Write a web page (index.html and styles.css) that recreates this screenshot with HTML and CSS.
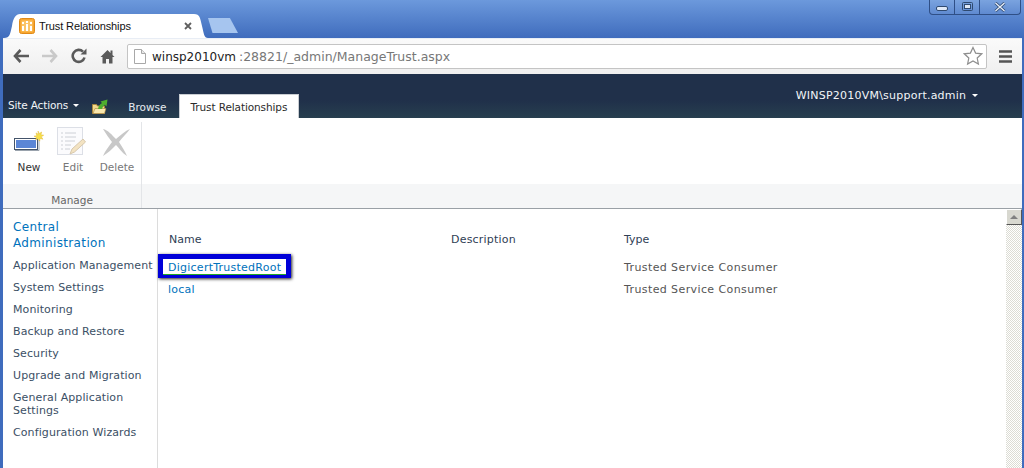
FILE: index.html
```html
<!DOCTYPE html>
<html lang="en">
<head>
<meta charset="utf-8">
<title>Trust Relationships</title>
<link rel="stylesheet" href="styles.css">
</head>
<body>
<div class="window">
  <header class="titlebar">
    <div class="tab">
      <svg class="favicon" width="16" height="16" viewBox="0 0 16 16"><rect x="0.5" y="0.5" width="15" height="15" rx="2" fill="#f7a630" stroke="#e08a18"/><rect x="2.500" y="2.500" width="11" height="11" fill="#fbc468"/><path d="M3 8h2v5H3zM7 6h2v7H7zM11 8h2v5h-2z" fill="#fff"/><path d="M3 4h2v2H3zM7 3h2v2H7zM11 4h2v2h-2z" fill="#fff"/></svg>
      <span class="tab-title">Trust Relationships</span>
      <svg class="tab-close" width="8" height="8" viewBox="0 0 8 8"><path d="M1 1l6 6M7 1l-6 6" stroke="#5f5f5f" stroke-width="1.800"/></svg>
    </div>
    <div class="new-tab"></div>
    <div class="win-buttons">
      <div class="win-btn win-min"><svg width="12" height="6" viewBox="0 0 12 6"><rect x="0.5" y="0.5" width="11" height="4" rx="1.500" fill="#dfe9f7" stroke="#2f4a70"/></svg></div>
      <div class="win-btn win-max"><svg width="11" height="10" viewBox="0 0 11 10"><rect x="0.5" y="0.5" width="10" height="8" rx="1" fill="none" stroke="#2f4a70"/><rect x="2.500" y="2.500" width="6" height="4" fill="#dfe9f7" stroke="#2f4a70"/></svg></div>
      <div class="win-btn win-close"><svg width="12" height="10" viewBox="0 0 12 10"><path d="M1.500 1l9 8M10.500 1l-9 8" stroke="#2f4a70" stroke-width="3"/><path d="M1.500 1l9 8M10.500 1l-9 8" stroke="#e6eef9" stroke-width="1.400"/></svg></div>
    </div>
  </header>

  <nav class="toolbar">
    <svg class="nav-icon" width="16" height="14" viewBox="0 0 16 14"><path d="M7.500 1L2 7l5.500 6M2.500 7H16" fill="none" stroke="#5a5a5a" stroke-width="2.600"/></svg>
    <svg class="nav-icon" width="16" height="14" viewBox="0 0 16 14"><path d="M8.500 1L14 7l-5.500 6M13.500 7H0" fill="none" stroke="#c9c9c9" stroke-width="2.600"/></svg>
    <svg class="nav-icon" width="16" height="16" viewBox="0 0 16 16"><path d="M13.500 9.500A6 6 0 1 1 12 3.700" fill="none" stroke="#5a5a5a" stroke-width="2.600"/><path d="M9.500 6.500h6v-6z" fill="#5a5a5a"/></svg>
    <svg class="nav-icon home" width="15" height="15" viewBox="0 0 15 15"><path d="M7.500 1L0.500 8h2v6.500h3.500V10h3v4.500h3.500V8h2l-2-2V1.500h-2v2.500z" fill="#5a5a5a"/></svg>
    <div class="omnibox">
      <svg class="page-icon" width="12" height="15" viewBox="0 0 12 15"><path d="M0.500 0.500h7l4 4v10h-11z" fill="#fff" stroke="#a8a8a8"/><path d="M7.500 0.500v4h4" fill="#e8e8e8" stroke="#a8a8a8"/></svg>
      <span class="url"><span class="host">winsp2010vm</span><span class="path">:28821/_admin/ManageTrust.aspx</span></span>
      <svg class="star" width="20" height="20" viewBox="0 0 20 20"><path d="M10 1.500l2.600 5.600 6.100 0.700-4.500 4.200 1.200 6.100L10 15l-5.400 3.100 1.200-6.100L1.300 7.800l6.100-0.700z" fill="#fff" stroke="#8e8e8e" stroke-width="1.200"/></svg>
    </div>
    <svg class="menu-icon" width="13" height="13" viewBox="0 0 13 13"><path d="M0 1.500h13M0 6.500h13M0 11.500h13" stroke="#555" stroke-width="2.600"/></svg>
  </nav>

  <main class="page">
    <div class="topbar">
      <div class="topbar-row">
        <span class="site-actions">Site Actions <i class="caret"></i></span>
        <svg class="folder-up" width="16" height="15" viewBox="0 0 16 15"><path d="M0.500 5.500h4l1 1.500h7v7.500h-12z" fill="#f3d98c" stroke="#a8853c"/><path d="M1 14.500l2-5h11l-1.500 5z" fill="#f9e8ae" stroke="#a8853c" stroke-width="0.600"/><path d="M6 10C6.500 7 8 5 10 4L8.500 2.500 15.500 0.500 14.500 7.500 12.800 5.800C11.500 7 10.500 8.500 10 10z" fill="#4fae2e"/></svg>
        <span class="ribbon-tab">Browse</span>
        <span class="ribbon-tab active">Trust Relationships</span>
        <span class="user">WINSP2010VM\support.admin <i class="caret"></i></span>
      </div>
    </div>
    <section class="ribbon">
      <div class="ribbon-group">
        <div class="ribbon-buttons">
          <div class="rbtn">
            <svg width="32" height="32" viewBox="0 0 32 32"><rect x="1.500" y="12.500" width="23" height="11" fill="#fff" stroke="#44546a"/><rect x="3" y="14" width="20" height="8" fill="#5b86d6"/><path d="M2 24.500h24V14" fill="none" stroke="#9aa3ad"/><path d="M25 5l1.200 2.500 2.500-1.500-0.800 2.800 2.800 0.400-2.400 1.600 1.600 2.400-2.800-0.800-0.400 2.800-1.700-2.400-2.400 1.200 1-2.600-2.600-1.200 2.800-0.500-0.800-2.800 2.400 1.300z" fill="#f6e04a" stroke="#e2b93a" stroke-width="0.500"/></svg>
            <span>New</span>
          </div>
          <div class="rbtn disabled">
            <svg width="32" height="32" viewBox="2 0 32 32"><rect x="2.500" y="1.500" width="25" height="27" fill="#fbfbfd" stroke="#dcdfe6"/><path d="M6 7h2M10 7h11M6 11h2M10 11h11M6 15h2M10 15h10M6 19h2M10 19h6M6 23h2M10 23h5" stroke="#cdd0d6"/><path d="M15 28l2-5 11-10 2.500 3-11 10z" fill="#f3e3c2" stroke="#d7c8ad"/></svg>
            <span>Edit</span>
          </div>
          <div class="rbtn disabled">
            <svg width="32" height="32" viewBox="1 0 32 32"><path d="M3 3c5 1 9 6 13 10 5-4 9-8 14-10-3 4-8 9-11 13 3 5 6 9 8 14-5-3-8-8-11-11-4 4-8 8-13 11 2-5 6-10 9-14C9 12 6 8 3 3z" fill="#c8c8c8"/></svg>
            <span>Delete</span>
          </div>
        </div>
        <div class="group-label">Manage</div>
      </div>
      <div class="ribbon-rest"><div class="ribbon-rest-bottom"></div></div>
    </section>
    <div class="content">
      <aside class="quicknav">
        <a class="qn-head">Central Administration</a>
        <ul class="qn-list">
          <li>Application Management</li>
          <li>System Settings</li>
          <li>Monitoring</li>
          <li>Backup and Restore</li>
          <li>Security</li>
          <li>Upgrade and Migration</li>
          <li>General Application Settings</li>
          <li>Configuration Wizards</li>
        </ul>
      </aside>
      <div class="main-col">
        <div class="list">
          <div class="row head"><span class="c1">Name</span><span class="c2">Description</span><span class="c3">Type</span></div>
          <div class="row"><span class="c1"><a class="link callout">DigicertTrustedRoot</a></span><span class="c2"></span><span class="c3">Trusted Service Consumer</span></div>
          <div class="row"><span class="c1"><a class="link">local</a></span><span class="c2"></span><span class="c3">Trusted Service Consumer</span></div>
        </div>
      </div>
      <div class="scrollbar"><div class="scroll-btn"><i></i></div></div>
    </div>
  </main>
</div>
</body>
</html>
```

FILE: styles.css
```css
* { box-sizing: border-box; }
html, body { margin: 0; padding: 0; height: 100%; overflow: hidden; }
body { font-family: "DejaVu Sans", Verdana, sans-serif; font-size: 11px; }
.window {
  width: 1024px; height: 468px; display: flex; flex-direction: column;
  background: linear-gradient(#6c99dc, #3f6cbd 38px);
  padding: 0 2px 0 3px;
}
.titlebar { height: 38px; flex: none; display: flex; align-items: flex-end; position: relative; margin-left: -3px; margin-right: -2px; }
.tab {
  width: 204px; height: 24px; margin-left: 4px; background: #fff;
  clip-path: path("M0 24 C6 24 6 20 8 12 C9 4 12 0 16 0 H190 C196 0 196 4 198 12 C200 20 200 24 204 24 Z");
  display: flex; align-items: center; padding: 0 0 1px 15px;
}
.favicon { flex: none; }
.tab-title { margin-left: 4px; font-family: "Liberation Sans", Arial, sans-serif; font-size: 11px; letter-spacing: -0.100px; color: #111; width: 145px; white-space: nowrap; }
.new-tab { width: 30px; height: 15px; margin: 0 0 5px 0; background: #a6c5ef; clip-path: polygon(0 0, 73% 0, 100% 100%, 15% 100%); }
.win-buttons {
  position: absolute; right: 3px; top: 0; width: 92px; height: 15px; display: flex;
  border: 1px solid #2f4f86; border-top: 0; border-radius: 0 0 4px 4px; background: linear-gradient(#7aa3df, #5f8ad0);
}
.win-btn { display: flex; align-items: center; justify-content: center; }
.win-min { width: 25px; border-right: 1px solid #2f4f86; padding-top: 3px; }
.win-max { width: 25px; border-right: 1px solid #2f4f86; }
.win-close { flex: 1; }
.toolbar {
  height: 36px; flex: none; background: linear-gradient(#fafafa, #efefef); display: flex; align-items: center;
  padding: 0 10px 1px 10px; border-top: 1px solid #e8edf5;
}
.nav-icon { flex: none; margin-right: 13px; }
.nav-icon.home { margin-right: 12px; }
.omnibox {
  flex: 1; height: 25px; margin-right: 12px; background: #fff; border: 1px solid #c4c4c4; border-radius: 2px;
  display: flex; align-items: center; padding: 0 3px 0 6px;
}
.page-icon { flex: none; }
.url { margin-left: 6px; flex: 1; font-family: "DejaVu Sans", sans-serif; white-space: nowrap; }
.host { color: #222; font-size: 12px; }
.path { color: #777; font-size: 12.500px; margin-left: 3px; }
.star { flex: none; }
.page { flex: 1; min-height: 0; display: flex; flex-direction: column; background: #fff; }
.topbar {
  height: 44px; flex: none; background: linear-gradient(#20304a 60%, #273f4f); display: flex; align-items: flex-end;
}
.topbar-row { display: flex; align-items: flex-end; width: 100%; height: 24px; color: #fff; position: relative; }
.site-actions { margin: 0 0 7px 5px; color: #f2f5f8; white-space: nowrap; font-size: 10.500px; letter-spacing: -0.150px; }
.caret { display: inline-block; width: 0; height: 0; border: 3px solid transparent; border-top-color: #fff; border-bottom: 0; margin-left: 2px; vertical-align: 2px; }
.folder-up { margin: 0 20px 4px 13px; flex: none; }
.ribbon-tab { height: 24px; padding: 7px 0 0; color: #e6ebf0; font-size: 10.500px; white-space: nowrap; margin-right: 13px; }
.ribbon-tab.active { background: #fff; color: #2b2b2b; padding: 6px 0 0 10px; border: 1px solid #c9cdd2; border-bottom: 0; width: 120px; letter-spacing: -0.100px; }
.user { position: absolute; right: 44px; bottom: 16px; white-space: nowrap; color: #f2f5f8; letter-spacing: 0.230px; }
.ribbon { height: 91px; flex: none; display: flex; border-bottom: 1px solid #9aa0a6; background: #fff; }
.ribbon-group { width: 139px; flex: none; display: flex; flex-direction: column; border-right: 1px solid #e3e5e8; margin-top: 4px; }
.ribbon-buttons { height: 62px; display: flex; padding-left: 4px; }
.rbtn { display: flex; flex-direction: column; align-items: center; width: 44px; color: #333; font-size: 10.500px; padding-top: 4px; gap: 3px; }
.rbtn.disabled { color: #777; }
.group-label { flex: 1; background: #f5f6f7; text-align: center; color: #666; padding-top: 10px; font-size: 10.500px; }
.ribbon-rest { flex: 1; display: flex; align-items: flex-end; }
.ribbon-rest-bottom { width: 100%; height: 24px; background: #f5f6f7; }
.content { flex: 1; min-height: 0; display: flex; }
.quicknav { width: 155px; flex: none; border-right: 1px solid #dcdcdc; padding: 10px 0 0 10px; }
.qn-head { display: block; width: 120px; color: #0072bc; font-size: 12px; line-height: 16px; letter-spacing: 0.350px; margin-bottom: 8px; }
.qn-list { list-style: none; margin: 0; padding: 0; display: flex; flex-direction: column; gap: 9px; color: #3b4f65; line-height: 13px; letter-spacing: 0.100px; }
.main-col { flex: 1; padding: 23px 0 0 10px; }
.list { display: flex; flex-direction: column; }
.row { display: flex; height: 22px; align-items: center; color: #555; }
.row.head { height: 24px; padding-bottom: 10px; color: #2f4055; }
.head .c2 { letter-spacing: 0.200px; }
.c1 { width: 283px; padding-left: 1px; }
.c2 { width: 173px; }
.c3 { flex: 1; letter-spacing: 0.400px; }
.head .c3 { letter-spacing: 0; }
.row .c1 .link { color: #0072bc; margin-left: -1px; letter-spacing: 0.250px; }
.callout { display: inline-block; position: relative; line-height: 13px; }
.callout::before {
  content: ""; position: absolute; left: -10px; right: -10px; top: -7px; bottom: -4px;
  border: 5px solid #0000d8; border-bottom-width: 4px; box-shadow: 1px 1px 3px #222;
}
.callout::after { content: ""; position: absolute; left: -5px; right: -5px; bottom: -1px; height: 1px; background: #22aa22; }
.scrollbar { width: 16px; flex: none; background: repeating-conic-gradient(#dcdcd4 0 25%, #fff 0 50%) 0 0 / 2px 2px; }
.scroll-btn { height: 16px; background: #d8d8d0; border: 1px solid; border-color: #fff #555 #555 #fff; display: flex; align-items: center; justify-content: center; }
.scroll-btn i { width: 0; height: 0; border: 4px solid transparent; border-bottom-color: #808080; border-top: 0; }
```
